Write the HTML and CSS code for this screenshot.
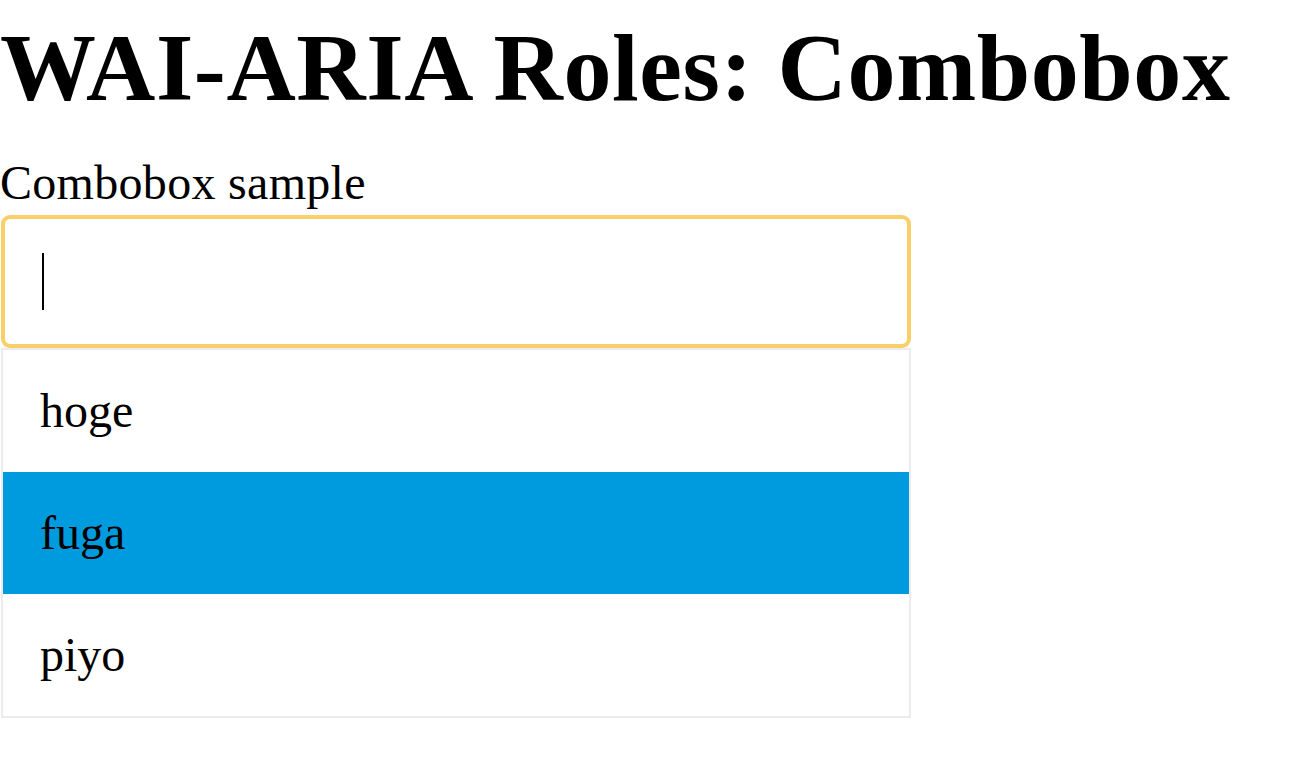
FILE: index.html
```html
<!DOCTYPE html>
<html lang="en">
<head>
<meta charset="utf-8">
<title>WAI-ARIA Roles: Combobox</title>
<link rel="stylesheet" href="styles.css">
</head>
<body>
<h1 class="title">WAI-ARIA Roles: Combobox</h1>
<div class="combo">
  <label class="combo-label" id="combo-label">Combobox sample</label>
  <div class="combo-input" role="combobox" aria-labelledby="combo-label" aria-expanded="true"><span class="caret"></span></div>
  <ul class="listbox" role="listbox">
    <li class="option" role="option">hoge</li>
    <li class="option is-active" role="option" aria-selected="true">fuga</li>
    <li class="option" role="option">piyo</li>
  </ul>
</div>
</body>
</html>
```
FILE: styles.css
```css
html, body {
  margin: 0;
  padding: 0;
  background: #fff;
}
body {
  font-family: "Liberation Serif", "Times New Roman", serif;
  font-size: 48px;
  color: #000;
}
.title {
  font-size: 96px;
  font-weight: bold;
  line-height: normal;
  letter-spacing: 0.6px;
  margin: 12px 0 0 0;
}
.combo {
  width: 910px;
  padding-left: 1px;
  display: flex;
  flex-direction: column;
}
.combo-label {
  display: block;
  margin: 32px 0 5px -1px;
  line-height: normal;
  letter-spacing: 0.3px;
}
.combo-input {
  box-sizing: border-box;
  height: 133px;
  border: 4px solid #f8cf68;
  border-radius: 9px;
  padding: 0 0 0 37px;
  display: flex;
  align-items: center;
}
.caret {
  display: block;
  width: 2px;
  height: 57px;
  background: #000;
}
.listbox {
  list-style: none;
  margin: 0;
  padding: 0;
  border: 2px solid #ececec;
}
.option {
  padding: 34px 37px;
  line-height: 54px;
  height: 54px;
}
.option.is-active {
  background: #009ade;
}
```
